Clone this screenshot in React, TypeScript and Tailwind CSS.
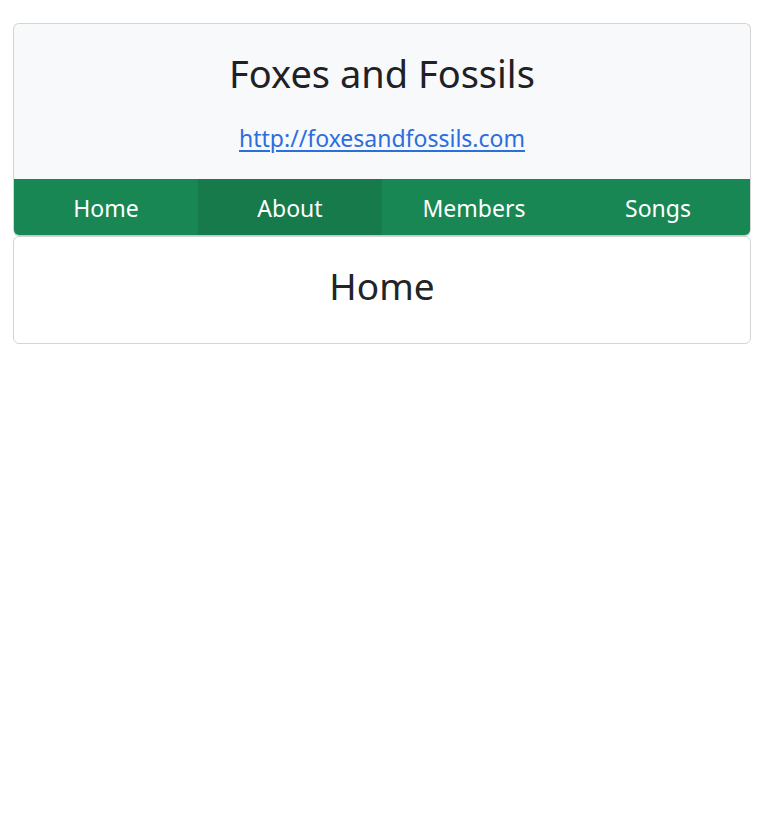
const tabs = ["Home", "About", "Members", "Songs"];

export default function App() {
  const active = "About";
  return (
    <div className="min-h-screen bg-white pt-[23px] pl-[13px] font-['Noto_Sans',sans-serif] text-[#212529]">
      <div className="w-[738px]">
        <div className="overflow-hidden rounded-[6px] border border-[#d4d4d4] border-b-[#a9d6bd] bg-[#f8f9fa]">
          <div className="flex h-[155px] flex-col items-center">
            <h1 className="mt-[24px] text-[38px] leading-[50px] text-[#1e2125]">Foxes and Fossils</h1>
            <a
              href="#"
              className="mt-[25px] text-[23px] leading-[30px] text-[#2a6ee0] underline underline-offset-[3px]"
            >
              http://foxesandfossils.com
            </a>
          </div>
          <nav className="grid h-[56px] grid-cols-4 bg-[#198754]">
            {tabs.map((t) => (
              <div
                key={t}
                className={`flex items-center justify-center pt-[2px] text-[23px] text-white ${
                  t === active ? "bg-[#177a4b]" : ""
                }`}
              >
                {t}
              </div>
            ))}
          </nav>
        </div>
        <div className="flex h-[108px] justify-center rounded-[6px] border border-[#d4d4d4] bg-white pt-[24px]">
          <h2 className="text-[37px] leading-[50px]">Home</h2>
        </div>
      </div>
    </div>
  );
}
